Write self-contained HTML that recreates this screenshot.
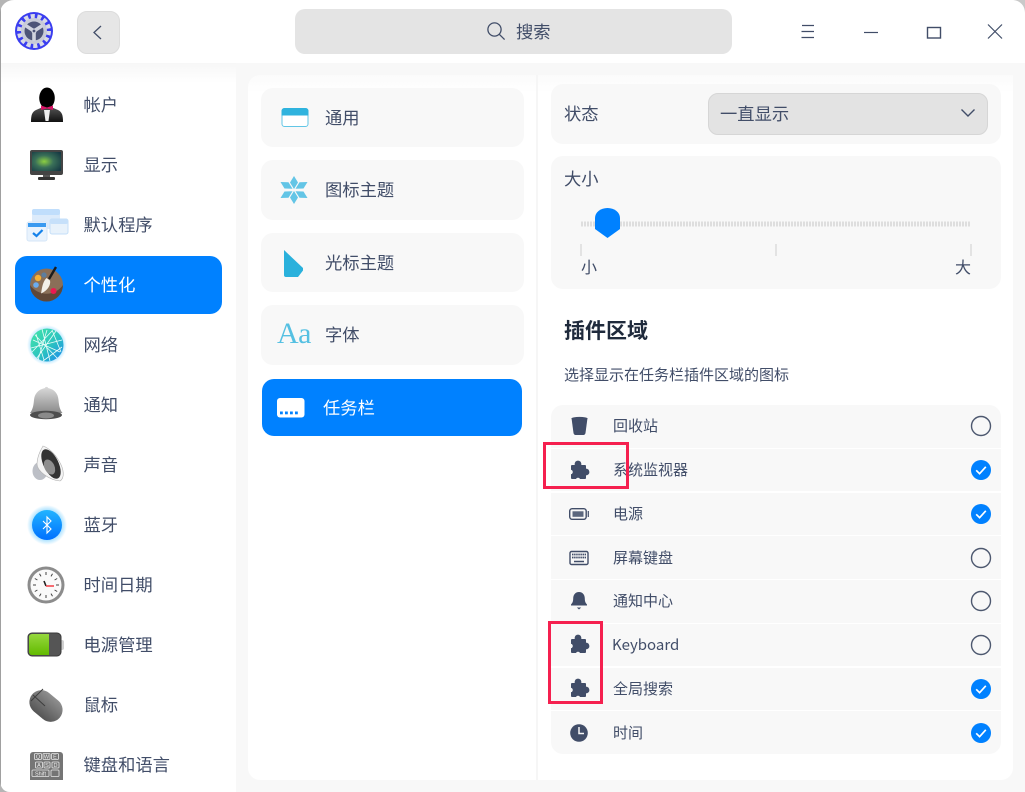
<!DOCTYPE html>
<html lang="zh"><head><meta charset="utf-8"><title>控制中心</title>
<style>
*{box-sizing:border-box;margin:0;padding:0}
html,body{width:1025px;height:792px;overflow:hidden;background:#fff}
body{position:relative;font-family:"Noto Sans CJK SC","Liberation Sans",sans-serif;color:#414d68}
.a{position:absolute}
.t{position:absolute;white-space:nowrap;line-height:24px;height:24px;font-size:17.300px;margin-top:-1px}
.s{position:absolute;white-space:nowrap;line-height:22px;height:22px;font-size:15px}
.card{position:absolute;background:#f8f8f8;border-radius:12px}
.row{position:absolute;left:551px;width:450px;background:#f8f8f8}
svg{position:absolute;overflow:visible}
.red{position:absolute;border:3px solid #f5204f}
</style></head><body>
<div class="a" style="left:0;top:0;width:1025px;height:792px;background:#fff"></div>
<div class="a" style="left:0;top:63px;width:1025px;height:729px;background:#f8f8f8"></div>
<div class="a" style="left:0;top:63px;width:236px;height:729px;background:linear-gradient(#f7f7f7,#fff 20px,#fff)"></div>
<div class="a" style="left:248px;top:75px;width:765px;height:705px;background:linear-gradient(#fbfbfb,#fff 18px,#fff);border-radius:12px 0 12px 12px"></div>
<div class="a" style="left:536px;top:75px;width:2px;height:705px;background:#f6f6f6"></div>
<div class="a" style="left:0;top:0;width:1px;height:792px;background:#a0a0a0"></div>

<!-- app logo -->
<svg style="left:15px;top:12px" width="38" height="38" viewBox="0 0 38 38">
<circle cx="19" cy="19" r="19" fill="#3a3df0"/>
<circle cx="19" cy="19" r="14.500" fill="none" stroke="#d8dae6" stroke-width="5" stroke-dasharray="4 2.500"/>
<circle cx="19" cy="19" r="13" fill="#c8cbd8"/>
<circle cx="19" cy="19" r="9.500" fill="#4d5478"/>
<path d="M19 19L19 29M19 19L10.500 13.500M19 19L27.500 13.500" stroke="#d0d3df" stroke-width="3.600"/>
<circle cx="19" cy="19" r="2" fill="#4d5478" stroke="#d0d3df" stroke-width="1.200"/>
</svg>
<!-- back -->
<div class="a" style="left:77px;top:11px;width:43px;height:43px;background:#e6e6e6;border:1px solid #dcdcdc;border-radius:10px"></div>
<svg style="left:77px;top:11px" width="43" height="43"><path d="M24 15L17 21.500L24 28" fill="none" stroke="#414d68" stroke-width="1.300"/></svg>
<!-- search -->
<div class="a" style="left:295px;top:9px;width:437px;height:45px;background:#e4e4e4;border-radius:10px"></div>
<svg style="left:486px;top:21px" width="20" height="20"><circle cx="8.500" cy="8.500" r="6.600" fill="none" stroke="#414d68" stroke-width="1.300"/><path d="M13.300 13.300L18.600 18.600" stroke="#414d68" stroke-width="1.300"/></svg>
<div class="t" style="left:516px;top:20px">搜索</div>
<!-- window buttons -->
<svg style="left:780px;top:0" width="245" height="63" fill="none" stroke="#414d68" stroke-width="1.200">
<path d="M22 25.500H34M21.500 31.500H34M21.500 37.500H34"/>
<path d="M84 32.500H98"/>
<rect x="147.500" y="27.500" width="13" height="10.500" stroke-width="1.400"/>
<path d="M208 24.500L222 38.500M222 24.500L208 38.500"/>
</svg>

<!-- sidebar -->
<div class="a" style="left:15px;top:256px;width:207px;height:58px;background:#0081ff;border-radius:12px"></div>
<div class="t" style="left:83.500px;top:93px">帐户</div>
<div class="t" style="left:83.500px;top:153px">显示</div>
<div class="t" style="left:83.500px;top:213px">默认程序</div>
<div class="t" style="left:83.500px;top:273px;color:#fff">个性化</div>
<div class="t" style="left:83.500px;top:333px">网络</div>
<div class="t" style="left:83.500px;top:393px">通知</div>
<div class="t" style="left:83.500px;top:453px">声音</div>
<div class="t" style="left:83.500px;top:513px">蓝牙</div>
<div class="t" style="left:83.500px;top:573px">时间日期</div>
<div class="t" style="left:83.500px;top:633px">电源管理</div>
<div class="t" style="left:83.500px;top:693px">鼠标</div>
<div class="t" style="left:83.500px;top:753px">键盘和语言</div>

<svg style="left:0;top:0" width="236" height="792">
<defs>
<linearGradient id="g1" x1="0" y1="0" x2="0" y2="1"><stop offset="0" stop-color="#555"/><stop offset="1" stop-color="#111"/></linearGradient>
<linearGradient id="g2" x1="0" y1="0" x2="1" y2="1"><stop offset="0" stop-color="#45e6a6"/><stop offset=".55" stop-color="#2cc4c0"/><stop offset="1" stop-color="#1a86f0"/></linearGradient>
<linearGradient id="g3" x1="0" y1="0" x2="0" y2="1"><stop offset="0" stop-color="#dadada"/><stop offset="1" stop-color="#8a8a8a"/></linearGradient>
<linearGradient id="g4" x1="0" y1="0" x2="0" y2="1"><stop offset="0" stop-color="#8f8f8f"/><stop offset="1" stop-color="#555"/></linearGradient>
<radialGradient id="g5" cx=".42" cy=".5" r=".7"><stop offset="0" stop-color="#8ccf42"/><stop offset=".45" stop-color="#3a7058"/><stop offset="1" stop-color="#173a44"/></radialGradient>
<radialGradient id="gl1"><stop offset=".75" stop-color="#8fd8ff" stop-opacity=".7"/><stop offset="1" stop-color="#8fd8ff" stop-opacity="0"/></radialGradient>
<linearGradient id="g6" x1="0" y1="0" x2="0" y2="1"><stop offset="0" stop-color="#22b4ff"/><stop offset="1" stop-color="#0070ff"/></linearGradient>
<linearGradient id="g7" x1="0" y1="0" x2="0" y2="1"><stop offset="0" stop-color="#96d83e"/><stop offset="1" stop-color="#62ba00"/></linearGradient>
</defs>
<!-- account -->
<path d="M31 122c0-7 1-10 5-12l7-3h8l7 3c4 2 5 5 5 12z" fill="url(#g1)"/>
<ellipse cx="47" cy="98" rx="7.800" ry="10.500" fill="#000"/>
<path d="M44 110h6l-1.500 11h-3z" fill="#eee"/>
<path d="M41 105.500l6 2 6-2v4.500l-6-1.500-6 1.500z" fill="#d81466"/>
<!-- display -->
<rect x="30" y="150" width="33" height="25" rx="2" fill="#444"/>
<rect x="32" y="152" width="29" height="19" fill="url(#g5)"/>
<rect x="43" y="175" width="7" height="2" fill="#555"/><rect x="38" y="177" width="17" height="3" rx="1" fill="#333"/>
<!-- default programs -->
<rect x="32" y="209" width="28" height="20" rx="3" fill="#dcebfb"/>
<rect x="32" y="209" width="28" height="6" rx="2" fill="#c0defc"/>
<rect x="50" y="219" width="18" height="15" rx="2" fill="#e8f2fb" stroke="#c4dff8"/>
<rect x="50" y="219" width="18" height="5" rx="2" fill="#c6e0fa"/>
<rect x="27" y="222" width="20" height="19" rx="2" fill="#e9f3fd" stroke="#d5e6f7"/>
<rect x="28" y="223" width="18" height="4" fill="#3a9af0"/>
<path d="M33 233l3.500 3 6-6" fill="none" stroke="#1582ea" stroke-width="2.200"/>
<!-- personalization -->
<circle cx="46.500" cy="285" r="16.500" fill="#8a6f58"/>
<path d="M30 285a16.500 16.500 0 0 0 33 0 20 20 0 0 1-33 0z" fill="#5f4738"/>
<circle cx="38" cy="278" r="3.200" fill="#f5b034"/>
<circle cx="36" cy="285" r="2.800" fill="#6aacf0"/>
<circle cx="44" cy="275" r="2.600" fill="#5d7e9e"/>
<circle cx="53.500" cy="291" r="3" fill="#ea1a50"/>
<path d="M56 267l-7 12" stroke="#1c1c1c" stroke-width="2.400"/>
<path d="M46.500 278l3.500 2.500c1 4-2 10-9 13 1-4 1-11 5.500-15.500z" fill="#f3f0ea"/>
<!-- network -->
<circle cx="47" cy="345" r="20" fill="url(#gl1)"/>
<circle cx="47" cy="345" r="16.500" fill="url(#g2)"/>
<path d="M35 335L57 358M42 329L50 361M31 348L62 340M37 358L56 331M33 340L60 352M47 330L38 360M43 361L62 347M36 334L44 360M52 330L61 352M32 352L52 331" stroke="#eafcf8" stroke-width=".8" fill="none"/>
<!-- bell -->
<path d="M45 388c0-1.500 3-1.500 3 0 7 1.500 10 6 10.500 12 .5 6 1.500 10 4 13H30c2.500-3 3.500-7 4-13 .5-6 4-10.500 11-12z" fill="url(#g3)"/>
<ellipse cx="46" cy="415" rx="16" ry="4.200" fill="#4e4e4e"/>
<ellipse cx="46" cy="415.500" rx="8" ry="3" fill="#8a8a8a"/>
<!-- sound -->
<ellipse cx="40" cy="471" rx="7.500" ry="9" fill="#bcbfc6"/>
<path d="M43 446c-3 5-6 12-6 18 0 7 12 16 23 17 5-3 4-12-1-20-4-7-10-13-16-15z" fill="#f4f4f4" stroke="#b0b0b0" stroke-width=".6"/>
<ellipse cx="51" cy="464" rx="7.500" ry="16" transform="rotate(-26 51 464)" fill="#333"/>
<ellipse cx="49.500" cy="467" rx="5" ry="8" transform="rotate(-26 49.500 467)" fill="#8e8e8e"/>
<!-- bluetooth -->
<circle cx="47" cy="525" r="20" fill="url(#gl1)"/>
<circle cx="47" cy="525" r="15" fill="url(#g6)"/>
<path d="M43 521L51 529L47 533V517L51 521L43 529" fill="none" stroke="#fff" stroke-width="1.100"/>
<!-- clock -->
<circle cx="46" cy="585" r="18.500" fill="#8c8c8c"/>
<circle cx="46" cy="585" r="15.500" fill="#fafafa"/>
<path d="M46 572v3M46 595v3M33 585h3M56 585h3M39.500 573.800l1.500 2.600M52.500 573.800l-1.500 2.600M34.800 578.500l2.600 1.500M57.200 578.500l-2.600 1.500M34.800 591.500l2.600-1.500M57.200 591.500l-2.600-1.500M39.500 596.200l1.500-2.600M52.500 596.200l-1.500-2.600" stroke="#444" stroke-width="1"/>
<path d="M44 581l2 5" stroke="#222" stroke-width="1.600"/>
<path d="M46 586h8" stroke="#f5484f" stroke-width="1.600"/>
<!-- battery -->
<rect x="60" y="640" width="4" height="10" rx="2" fill="#d0d0d0"/>
<rect x="28" y="633" width="33" height="23" rx="4" fill="#555" stroke="#3a3a3a"/>
<path d="M29 637a3 3 0 0 1 3-3h17v21H32a3 3 0 0 1-3-3z" fill="url(#g7)"/>
<!-- mouse -->
<rect x="28" y="694" width="36" height="24" rx="12" transform="rotate(40 46 706)" fill="url(#g4)"/>
<path d="M31 701L43 689M33 695L45 706" stroke="#3d3d3d" stroke-width="1" fill="none"/>
<!-- keyboard -->
<path d="M30 755a3 3 0 0 1 3-3h27a3 3 0 0 1 3 3v25H30z" fill="#757575"/>
<g fill="#757575" stroke="#e6e6e6" stroke-width=".8">
<rect x="34.500" y="753.500" width="7" height="6" rx="1"/><rect x="43" y="753.500" width="7" height="6" rx="1"/><rect x="51.500" y="753.500" width="7" height="6" rx="1"/>
<rect x="35.500" y="762" width="7" height="6" rx="1"/><rect x="44" y="762" width="6" height="6" rx="1"/><rect x="52" y="762" width="7" height="6" rx="1"/>
<rect x="32" y="770" width="17" height="6.500" rx="1"/><rect x="51" y="770" width="8" height="6.500" rx="1"/>
</g>
<g fill="#eee" font-size="5.500" font-family="'Liberation Sans',sans-serif" text-anchor="middle">
<text x="38" y="758.500">Q</text><text x="46.500" y="758.500">W</text><text x="55" y="758.500">E</text>
<text x="39" y="767">A</text><text x="47" y="767">S</text><text x="55.500" y="767">D</text>
<text x="40.500" y="775.500">Shift</text>
</g>
</svg>

<!-- middle column -->
<div class="card" style="left:261px;top:88px;width:263px;height:59px"></div>
<div class="card" style="left:261px;top:160px;width:263px;height:60px"></div>
<div class="card" style="left:261px;top:233px;width:263px;height:59px"></div>
<div class="card" style="left:261px;top:305px;width:263px;height:60px"></div>
<div class="card" style="left:262px;top:379px;width:260px;height:57px;background:#0081ff"></div>
<div class="t" style="left:325px;top:106px">通用</div>
<div class="t" style="left:325px;top:178px">图标主题</div>
<div class="t" style="left:325px;top:251px">光标主题</div>
<div class="t" style="left:325px;top:323px">字体</div>
<div class="t" style="left:323px;top:396px;color:#fff">任务栏</div>
<svg style="left:261px;top:88px" width="263" height="350">
<rect x="21" y="20.500" width="26" height="18" rx="2.500" fill="#fff" stroke="#62c6e6"/>
<path d="M20.500 23a3 3 0 0 1 3-3h21a3 3 0 0 1 3 3v4.500h-27z" fill="#2fb3de"/>
<g fill="#63c5e6">
<path d="M33 88l4 6.500-4 6.500-4-6.500z"/><path d="M33 103l4 6.500-4 6.500-4-6.500z"/>
<path d="M19.500 94l8 .3 4 6.500-8-.3z"/><path d="M46.500 94l-8 .3-4 6.500 8-.3z"/>
<path d="M19.500 110l8-.3 4-6.500-8 .3z"/><path d="M46.500 110l-8-.3-4-6.500 8 .3z"/>
</g>
<path d="M23 162L42 180v2.500l-5 6.500H25a2 2 0 0 1-2-2z" fill="#2ab1dc"/>
</svg>
<div class="a" style="left:277px;top:317px;font:30px/34px 'Liberation Serif',serif;color:#55c0e2;letter-spacing:-.5px">Aa</div>
<svg style="left:277px;top:398px" width="28" height="20">
<rect x="0" y="0" width="27.500" height="19.500" rx="3" fill="#fff"/>
<g fill="#0081ff"><rect x="3" y="13.500" width="2.800" height="2.800"/><rect x="8" y="13.500" width="2.800" height="2.800"/><rect x="13" y="13.500" width="2.800" height="2.800"/><rect x="18" y="13.500" width="2.800" height="2.800"/></g>
</svg>

<!-- right column -->
<div class="card" style="left:551px;top:84px;width:450px;height:60px"></div>
<div class="t" style="left:564px;top:102px">状态</div>
<div class="a" style="left:708px;top:93px;width:280px;height:42px;background:#e3e3e3;border:1px solid #d6d6d6;border-radius:10px"></div>
<div class="t" style="left:720px;top:102px">一直显示</div>
<svg style="left:960px;top:108px" width="16" height="12"><path d="M1.500 1.500L8 8L14.500 1.500" fill="none" stroke="#414d68" stroke-width="1.400"/></svg>

<div class="card" style="left:551px;top:156px;width:450px;height:133px"></div>
<div class="t" style="left:564px;top:167px">大小</div>
<svg style="left:551px;top:200px" width="450" height="60">
<path d="M30 24H419" stroke="#dedede" stroke-width="5" stroke-dasharray="2 1"/>
<path d="M44 18a12.500 10 0 0 1 25 0v11L56.500 38 44 29z" fill="#0081ff"/>
<path d="M30 44v12M225 44v12M420 44v12" stroke="#dcdcdc" stroke-width="1.500"/>
</svg>
<div class="t" style="left:581px;top:255px;font-size:16px">小</div>
<div class="t" style="left:955px;top:255px;font-size:16px">大</div>

<div class="a" style="left:564px;top:315px;font-size:21px;font-weight:700;line-height:30px;color:#1f2a3c;white-space:nowrap">插件区域</div>
<div class="s" style="left:564px;top:364px">选择显示在任务栏插件区域的图标</div>

<div class="row" style="top:405px;height:43px;border-radius:12px 12px 0 0"></div>
<div class="row" style="top:449px;height:42px"></div>
<div class="row" style="top:493px;height:42px"></div>
<div class="row" style="top:536px;height:43px"></div>
<div class="row" style="top:580px;height:43px"></div>
<div class="row" style="top:624px;height:42px"></div>
<div class="row" style="top:668px;height:42px"></div>
<div class="row" style="top:711px;height:43px;border-radius:0 0 12px 12px"></div>

<div class="s" style="left:613px;top:415px">回收站</div>
<div class="s" style="left:613px;top:459px">系统监视器</div>
<div class="s" style="left:613px;top:503px">电源</div>
<div class="s" style="left:613px;top:547px">屏幕键盘</div>
<div class="s" style="left:613px;top:590px">通知中心</div>
<div class="s" style="left:612px;top:634px">Keyboard</div>
<div class="s" style="left:613px;top:678px">全局搜索</div>
<div class="s" style="left:613px;top:722px">时间</div>

<svg style="left:0;top:0" width="1025" height="792">
<defs>
<g id="pz" fill="#414d68">
<rect x="-9" y="-5" width="15" height="14" rx="1"/>
<circle cx="-2" cy="-6" r="3.400"/>
<circle cx="6" cy="2" r="3.400"/>
<circle cx="-9.500" cy="2" r="2.300" fill="#f8f8f8"/>
<circle cx="-2" cy="9.800" r="2" fill="#f8f8f8"/>
</g>
<g id="ck"><circle r="10" fill="#0081ff"/><path d="M-4.800 .3L-1.400 3.700L4.800-3.200" fill="none" stroke="#fff" stroke-width="1.700"/></g>
<circle id="un" r="9.500" fill="none" stroke="#4d586f" stroke-width="1.400"/>
</defs>
<path d="M571.500 418h16l-2 15c-.2 1-1 2-2 2h-8c-1 0-1.800-1-2-2z" fill="#414d68"/>
<ellipse cx="579.500" cy="418.500" rx="8" ry="1.600" fill="#414d68"/>
<use href="#pz" x="580" y="470"/>
<rect x="569.700" y="508.700" width="16.500" height="10.600" rx="2.500" fill="none" stroke="#414d68" stroke-width="1.400"/>
<rect x="572.500" y="511.300" width="11" height="5.500" fill="#414d68" opacity=".85"/>
<path d="M588.300 511v6" stroke="#414d68" stroke-width="1.200"/>
<rect x="570" y="551.500" width="18" height="13" rx="1.500" fill="none" stroke="#414d68" stroke-width="1.400"/>
<path d="M572 554.500h14M572 557.500h14" stroke="#414d68" stroke-width="1.800" stroke-dasharray="1.500 .6"/>
<path d="M574 561.500h10" stroke="#414d68" stroke-width="1.500"/>
<path d="M579 592c3.800 0 5.800 3 5.800 6.500 0 3 .8 4.500 2.200 6v1h-16v-1c1.400-1.500 2.200-3 2.200-6 0-3.500 2-6.500 5.800-6.500z" fill="#414d68"/>
<path d="M576.800 607.500h4.400l-2.200 2z" fill="#414d68"/>
<use href="#pz" x="580" y="644"/>
<use href="#pz" x="580" y="688"/>
<circle cx="579" cy="733" r="8.800" fill="#414d68"/>
<path d="M579 727v6.500h5" fill="none" stroke="#f8f8f8" stroke-width="1.500"/>
<use href="#un" x="981" y="426"/>
<use href="#ck" x="981" y="470"/>
<use href="#ck" x="981" y="514"/>
<use href="#un" x="981" y="558"/>
<use href="#un" x="981" y="601"/>
<use href="#un" x="981" y="645"/>
<use href="#ck" x="981" y="689"/>
<use href="#ck" x="981" y="733"/>
</svg>

<div class="red" style="left:543px;top:442px;width:86px;height:47px"></div>
<div class="red" style="left:548px;top:621px;width:55px;height:83px"></div>

<!-- window corners -->
<svg style="left:0;top:0" width="1025" height="792">
<path d="M0 0H14C6 0 0 6 0 14Z" fill="#b5b5b5"/>
<path d="M1025 0H1012C1020 0 1025 6 1025 13Z" fill="#c9c9c9"/>
<path d="M0 792H10C4 792 1 788 0 782Z" fill="#b5b5b5"/>
</svg>
</body></html>
